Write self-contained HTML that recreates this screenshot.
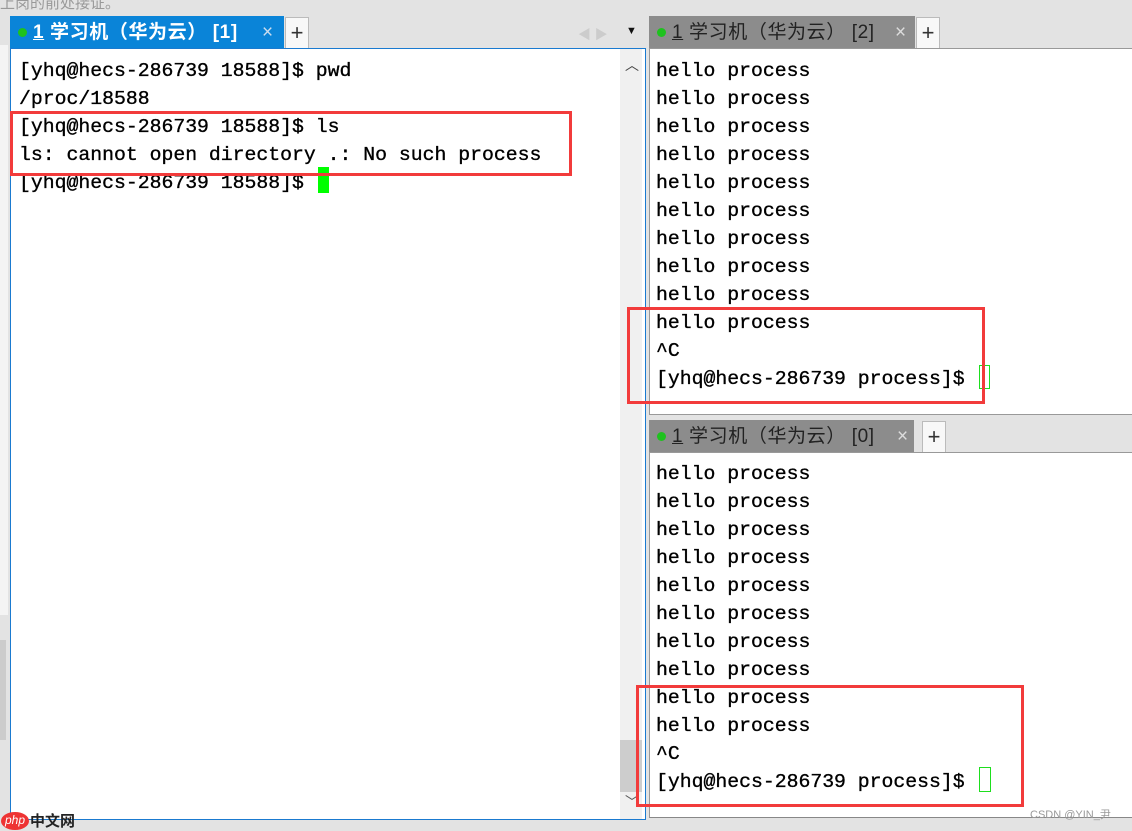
<!DOCTYPE html>
<html><head><meta charset="utf-8"><style>
*{margin:0;padding:0;box-sizing:border-box}
body{width:1132px;height:830px;background:#e3e3e3;position:relative;overflow:hidden;font-family:"Liberation Sans","Noto Sans CJK SC",sans-serif}
.abs{position:absolute}
.mono{font-family:"Liberation Mono","DejaVu Sans Mono",monospace;font-size:19.8px;line-height:28px;color:#000;white-space:pre;-webkit-text-stroke:0.35px #000}
.tab{position:absolute;height:32px;font-size:19px;line-height:33px;color:#222;letter-spacing:0.6px}
.dot{display:inline-block;width:9px;height:9px;border-radius:50%;background:#1ec21e;margin:0 6px 0 8px;vertical-align:1px}
.plus{position:absolute;width:24px;height:31px;background:#f8f8f8;border:1px solid #bbb;border-bottom:none;text-align:center;font-size:22px;line-height:29px;color:#333}
.red{position:absolute;border:3px solid #f23b3b}
.x{position:absolute;top:0;font-weight:normal;letter-spacing:0}
</style></head><body>
<div class="abs" style="left:0;top:-8px;font-size:15px;color:#999">上岗的前处接证。</div>
<div class="abs" style="left:0;top:45px;width:8px;height:570px;background:#f4f4f4"></div>
<div class="abs" style="left:0;top:640px;width:6px;height:100px;background:#ccc"></div>
<!-- left pane -->
<div class="tab" style="left:10px;top:16px;width:274px;background:#0a84d8;color:#fff;font-weight:bold"><span class="dot"></span><u>1</u> 学习机（华为云） [1]<span class="x" style="left:252px;color:#cde">×</span></div>
<div class="plus" style="left:285px;top:17px">+</div>
<div class="abs" style="left:578px;top:24px;color:#ccc;font-size:13px">◀ ▶</div>
<div class="abs" style="left:626px;top:25px;font-size:11px;color:#111">▼</div>
<div class="abs" style="left:10px;top:48px;width:636px;height:772px;background:#fff;border:1px solid #1a7ad0"></div>
<div class="abs" style="left:620px;top:49px;width:22px;height:770px;background:#f0f0f0"></div>
<div class="abs" style="left:620px;top:740px;width:22px;height:52px;background:#cdcdcd"></div>
<div class="abs" style="left:625px;top:55px;font-size:14px;color:#444">︿</div>
<div class="abs" style="left:625px;top:792px;font-size:14px;color:#555">﹀</div>
<div class="abs mono" style="left:19px;top:57px">[yhq@hecs-286739 18588]$ pwd
/proc/18588
[yhq@hecs-286739 18588]$ ls
ls: cannot open directory .: No such process
[yhq@hecs-286739 18588]$ </div>
<div class="abs" style="left:318px;top:167px;width:11px;height:26px;background:#00ff00"></div>
<div class="red" style="left:10px;top:111px;width:562px;height:65px"></div>
<!-- right top -->
<div class="tab" style="left:649px;top:16px;width:266px;background:#8c8c8c"><span class="dot"></span><u>1</u> 学习机（华为云） [2]<span class="x" style="left:246px;color:#ddd">×</span></div>
<div class="plus" style="left:916px;top:17px">+</div>
<div class="abs" style="left:649px;top:48px;width:483px;height:367px;background:#fff;border-left:1px solid #999;border-top:1px solid #999;border-bottom:1px solid #999"></div>
<div class="abs mono" style="left:656px;top:57px">hello process
hello process
hello process
hello process
hello process
hello process
hello process
hello process
hello process
hello process
^C
[yhq@hecs-286739 process]$ </div>
<div class="abs" style="left:979px;top:365px;width:11px;height:24px;border:1px solid #1ede1e"></div>
<div class="red" style="left:627px;top:307px;width:358px;height:97px"></div>
<!-- right bottom -->
<div class="tab" style="left:649px;top:420px;width:265px;background:#8c8c8c"><span class="dot"></span><u>1</u> 学习机（华为云） [0]<span class="x" style="left:248px;color:#ddd">×</span></div>
<div class="plus" style="left:922px;top:421px">+</div>
<div class="abs" style="left:649px;top:452px;width:483px;height:366px;background:#fff;border-left:1px solid #999;border-top:1px solid #999;border-bottom:1px solid #888"></div>
<div class="abs mono" style="left:656px;top:460px">hello process
hello process
hello process
hello process
hello process
hello process
hello process
hello process
hello process
hello process
^C
[yhq@hecs-286739 process]$ </div>
<div class="abs" style="left:979px;top:767px;width:12px;height:25px;border:1px solid #1ede1e"></div>
<div class="red" style="left:636px;top:685px;width:388px;height:122px"></div>
<div class="abs" style="left:1030px;top:806px;font-size:11px;color:#999">CSDN @YIN_尹</div>
<div class="abs" style="left:1px;top:812px;width:28px;height:18px;border-radius:50%;background:#e33;color:#fff;font-size:12px;line-height:17px;text-align:center;font-style:italic">php</div>
<div class="abs" style="left:30px;top:810px;font-size:15px;font-weight:bold;color:#222">中文网</div>
</body></html>
